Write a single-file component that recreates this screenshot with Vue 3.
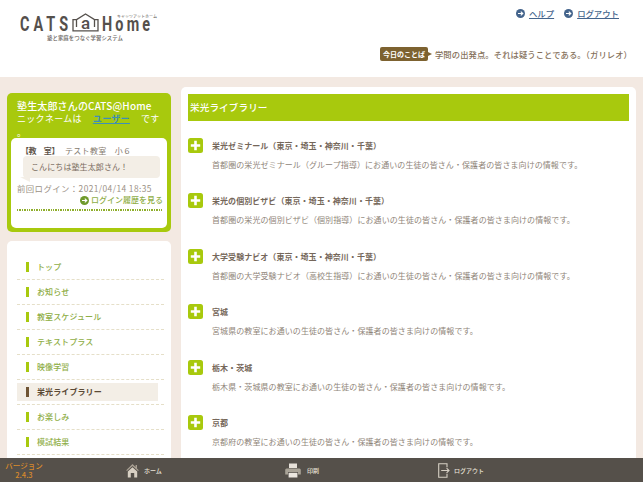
<script setup>
const menu = [
  { label: 'トップ' },
  { label: 'お知らせ' },
  { label: '教室スケジュール' },
  { label: 'テキストプラス' },
  { label: '映像学習' },
  { label: '栄光ライブラリー', active: true },
  { label: 'お楽しみ' },
  { label: '模試結果' }
]
const items = [
  { t: '栄光ゼミナール（東京・埼玉・神奈川・千葉）', d: '首都圏の栄光ゼミナール（グループ指導）にお通いの生徒の皆さん・保護者の皆さま向けの情報です。' },
  { t: '栄光の個別ビザビ（東京・埼玉・神奈川・千葉）', d: '首都圏の栄光の個別ビザビ（個別指導）にお通いの生徒の皆さん・保護者の皆さま向けの情報です。' },
  { t: '大学受験ナビオ（東京・埼玉・神奈川・千葉）', d: '首都圏の大学受験ナビオ（高校生指導）にお通いの生徒の皆さん・保護者の皆さま向けの情報です。' },
  { t: '宮城', d: '宮城県の教室にお通いの生徒の皆さん・保護者の皆さま向けの情報です。' },
  { t: '栃木・茨城', d: '栃木県・茨城県の教室にお通いの生徒の皆さん・保護者の皆さま向けの情報です。' },
  { t: '京都', d: '京都府の教室にお通いの生徒の皆さん・保護者の皆さま向けの情報です。' }
]
</script>

<template>
  <div class="page">
    <header class="header">
      <div class="logo">
        <div class="logo-main">
          <span class="logo-word cats">CATS</span>
          <svg class="logo-house" width="27" height="19" viewBox="0 0 27 19">
            <path d="M4.5 6.6H1V17.9H26V6.6H22.5L13.5 0.9L4.5 6.6V14" fill="none" stroke="#55504c" stroke-width="1.3" />
            <path d="M22.5 6.6V14" fill="none" stroke="#55504c" stroke-width="1.3" />
            <text x="13.5" y="15.6" text-anchor="middle" class="logo-a">a</text>
          </svg>
          <span class="logo-word home">Home</span>
          <span class="logo-kana">キャッツアットホーム</span>
        </div>
        <div class="logo-sub">塾と家庭をつなぐ学習システム</div>
      </div>
      <div class="header-right">
        <div class="links">
          <a class="top-link"><svg class="arrow" width="9" height="9" viewBox="0 0 10 10"><circle cx="5" cy="5" r="5" fill="#44648c" /><path d="M2.2 5H7.6M5.3 2.8L7.6 5L5.3 7.2" fill="none" stroke="#fff" stroke-width="1.2" /></svg><span>ヘルプ</span></a>
          <a class="top-link"><svg class="arrow" width="9" height="9" viewBox="0 0 10 10"><circle cx="5" cy="5" r="5" fill="#44648c" /><path d="M2.2 5H7.6M5.3 2.8L7.6 5L5.3 7.2" fill="none" stroke="#fff" stroke-width="1.2" /></svg><span>ログアウト</span></a>
        </div>
        <div class="quote">
          <span class="quote-tag">今日のことば</span>
          <span class="quote-text">学問の出発点。それは疑うことである。（ガリレオ）</span>
        </div>
      </div>
    </header>

    <div class="body">
      <aside class="side">
        <section class="user-card">
          <div class="user-name">塾生太郎さんのCATS@Home</div>
          <div class="user-nick">ニックネームは<a class="nick-link">ユーザー</a>です<br>。</div>
          <div class="user-inner">
            <div class="room"><b>【教　室】</b><span>テスト教室　小６</span></div>
            <div class="bubble">こんにちは塾生太郎さん！</div>
            <div class="last">前回ログイン：2021/04/14 18:35</div>
            <div class="history"><svg width="9" height="9" viewBox="0 0 10 10"><circle cx="5" cy="5" r="5" fill="#6f9a2b" /><path d="M2.2 5H7.6M5.3 2.8L7.6 5L5.3 7.2" fill="none" stroke="#fff" stroke-width="1.2" /></svg>ログイン履歴を見る</div>
            <div class="dots"></div>
          </div>
        </section>
        <nav class="menu">
          <div v-for="m in menu" :key="m.label" class="menu-row">
            <div class="menu-item" :class="{ active: m.active }"><i class="menu-bar"></i>{{ m.label }}</div>
          </div>
        </nav>
      </aside>

      <main class="content">
        <h1 class="title">栄光ライブラリー</h1>
        <div class="list">
          <div v-for="it in items" :key="it.t" class="entry">
            <span class="plus"><svg width="15" height="15" viewBox="0 0 15 15"><path d="M7.5 2.8V12.2M2.8 7.5H12.2" stroke="#fff" stroke-width="2.6" /></svg></span>
            <div class="entry-text">
              <div class="entry-title">{{ it.t }}</div>
              <div class="entry-desc">{{ it.d }}</div>
            </div>
          </div>
        </div>
      </main>
    </div>

    <footer class="footer">
      <div class="version">バージョン<br>2.4.3</div>
      <div class="foot-btn home-btn">
        <svg width="13" height="15" viewBox="0 0 13 15"><path d="M6.5 1L0.2 7.2L1 8L6.5 3L12 8L12.8 7.2L11 5.4V2H9.6V4Z" fill="#a89f92" /><path d="M1.8 8.4L6.5 4.2L11.2 8.4V14.5H8.2V10H4.8V14.5H1.8Z" fill="#d8d0c3" /></svg>
        <span>ホーム</span>
      </div>
      <div class="foot-btn print-btn">
        <svg width="16" height="15" viewBox="0 0 16 15"><path d="M4 0.5H12V5H4Z" fill="#e6e0d8" /><path d="M1.5 5.5H14.5Q15.8 5.5 15.8 7V11.5H13V9H3V11.5H0.2V7Q0.2 5.5 1.5 5.5Z" fill="#a9a397" /><path d="M3.6 9.8H12.4V14.5H3.6Z" fill="#ece7e0" /></svg>
        <span>印刷</span>
      </div>
      <div class="foot-btn logout-btn">
        <svg width="12" height="15" viewBox="0 0 12 15"><path d="M9 4.2V0.7H0.7V14.3H9V10.8" fill="none" stroke="#d6cfc4" stroke-width="1.1" /><path d="M3.2 7.5H11M8.6 5.2L11 7.5L8.6 9.8" fill="none" stroke="#d6cfc4" stroke-width="1.1" /></svg>
        <span>ログアウト</span>
      </div>
    </footer>
  </div>
</template>

<style scoped>
.page {
  width: 643px;
  height: 482px;
  display: flex;
  flex-direction: column;
  overflow: hidden;
  background: #f3e9e2;
  font-family: "Noto Sans CJK JP", "Noto Sans", sans-serif;
  color: #6f655c;
}
.header {
  height: 77px;
  flex: none;
  background: #fff;
  display: flex;
  justify-content: space-between;
}
.logo { padding: 13px 0 0 20px; }
.logo-main {
  display: flex;
  align-items: flex-end;
  height: 19px;
  position: relative;
}
.logo-word {
  font-family: Roboto, "Liberation Sans", sans-serif;
  font-weight: 700;
  color: #55504c;
  font-size: 20px;
  line-height: 15px;
  display: inline-block;
  transform: scaleX(0.72);
  transform-origin: left center;
  white-space: nowrap;
  flex: none;
}
.cats { letter-spacing: 5.6px; width: 52px; }
.home { letter-spacing: 4.4px; width: 49px; margin-left: 3px; }
.logo-house { display: block; flex: none; }
.logo-a {
  font-family: Roboto, "Liberation Sans", sans-serif;
  font-size: 17px;
  font-weight: 500;
  fill: #55504c;
}
.logo-kana {
  position: absolute;
  left: 97px;
  top: 1px;
  font-size: 4px;
  line-height: 5px;
  white-space: nowrap;
  color: #55504c;
  letter-spacing: 0;
}
.logo-sub {
  margin: 2px 0 0 27px;
  font-size: 5.4px;
  line-height: 9px;
  font-weight: 500;
  color: #6a655f;
  letter-spacing: 0.05px;
}
.header-right {
  display: flex;
  flex-direction: column;
  align-items: flex-end;
  padding-right: 11px;
}
.links {
  display: flex;
  gap: 10px;
  padding: 7px 13px 0 0;
}
.top-link {
  display: flex;
  align-items: center;
  gap: 4px;
  font-size: 8.4px;
  line-height: 12px;
  font-weight: 500;
  color: #44648c;
}
.top-link span { text-decoration: underline; }
.quote {
  display: flex;
  align-items: center;
  margin-top: 28px;
}
.quote-tag {
  position: relative;
  width: 48px;
  height: 14px;
  background: #7d6230;
  border-radius: 2px;
  color: #fff;
  font-size: 7px;
  font-weight: 700;
  line-height: 14px;
  text-align: center;
  margin-right: 7px;
}
.quote-tag::after {
  content: "";
  position: absolute;
  right: -4px;
  top: 5px;
  border-left: 4px solid #7d6230;
  border-top: 2px solid transparent;
  border-bottom: 2px solid transparent;
}
.quote-text {
  font-size: 8.3px;
  line-height: 14px;
  font-weight: 500;
  color: #85705a;
  letter-spacing: 0.1px;
}
.body {
  flex: 1;
  min-height: 0;
  display: flex;
  align-items: flex-start;
  padding: 10px 7px 0;
  gap: 10px;
  overflow: hidden;
}
.side {
  width: 164px;
  flex: none;
  padding-top: 6px;
  display: flex;
  flex-direction: column;
  gap: 9px;
}
.user-card {
  height: 139px;
  box-sizing: border-box;
  background: #a8c90d;
  border-radius: 5px;
  padding: 6px 4px 0;
  color: #fff;
}
.user-name {
  padding-left: 6px;
  font-size: 10px;
  line-height: 13px;
  font-weight: 500;
  letter-spacing: 0.15px;
  white-space: nowrap;
}
.user-nick {
  padding-left: 6px;
  font-size: 9px;
  line-height: 14px;
  letter-spacing: 0.3px;
  height: 26px;
  margin-top: 0;
}
.nick-link {
  color: #3d8fb8;
  font-weight: 700;
  text-decoration: underline;
  margin: 0 11px;
}
.user-inner {
  height: 90px;
  box-sizing: border-box;
  background: #fff;
  border-radius: 5px;
  padding: 7px 4px 0 6px;
  color: #85796d;
}
.room {
  font-size: 8px;
  line-height: 12px;
  display: flex;
  gap: 11px;
  padding-left: 4px;
}
.room b { color: #5f554b; font-weight: 700; width: 33px; white-space: nowrap; letter-spacing: -0.4px; }
.room span { letter-spacing: 0.3px; }
.bubble {
  position: relative;
  margin: -1px 0 0 6px;
  width: 137px;
  box-sizing: border-box;
  height: 22px;
  background: #f3eee6;
  border-radius: 4px;
  padding-left: 8px;
  font-size: 8px;
  line-height: 22px;
  color: #7a6c5e;
  letter-spacing: 0.1px;
}
.bubble::after {
  content: "";
  position: absolute;
  left: -3px;
  bottom: -4px;
  width: 0;
  height: 0;
  border-top: 5px solid #f3eee6;
  border-left: 10px solid transparent;
}
.last {
  font-size: 8.4px;
  line-height: 12px;
  margin-top: 4px;
  color: #9b9186;
  letter-spacing: 0.42px;
  white-space: nowrap;
}
.history {
  display: flex;
  align-items: center;
  justify-content: flex-end;
  gap: 2px;
  padding-right: 0;
  font-size: 8px;
  line-height: 12px;
  font-weight: 500;
  color: #8fae47;
  white-space: nowrap;
}
.dots {
  margin-top: 3px;
  height: 1.5px;
  background-image: repeating-linear-gradient(90deg, #8fae2c 0 1.4px, transparent 1.4px 2.4px);
}
.menu {
  background: #fff;
  border-radius: 5px;
  padding: 14px 7px 0 10px;
  height: 230px;
  box-sizing: border-box;
}
.menu-row {
  height: 25px;
  box-sizing: border-box;
  border-bottom: 1px dashed #e5dfc8;
  padding-top: 3px;
}
.menu-item {
  display: flex;
  align-items: center;
  gap: 8px;
  height: 18px;
  width: 141px;
  padding: 0 0 1px 9px;
  box-sizing: border-box;
  font-size: 8px;
  font-weight: 500;
  color: #8fae47;
  letter-spacing: 0.1px;
  white-space: nowrap;
}
.menu-bar {
  width: 3px;
  height: 10px;
  background: #a8c90d;
  flex: none;
}
.menu-item.active {
  background: #f3eee6;
  color: #5b4a35;
  font-weight: 700;
}
.active .menu-bar { background: #6f5433; }
.content {
  flex: 1;
  height: 460px;
  background: #fff;
  border-radius: 5px;
  padding: 7px 7px 0;
  box-sizing: border-box;
}
.title {
  margin: 0;
  height: 27px;
  background: #a8c90d;
  color: #fff;
  font-size: 9.6px;
  line-height: 27px;
  font-weight: 500;
  padding-left: 2px;
  letter-spacing: 0.1px;
}
.list {
  padding-top: 17px;
  display: flex;
  flex-direction: column;
}
.entry {
  height: 55.4px;
  flex: none;
  display: flex;
  gap: 9px;
}
.plus {
  width: 15px;
  height: 15px;
  border-radius: 2.5px;
  background: #a8c90d;
  flex: none;
  display: block;
}
.plus svg { display: block; }
.entry-text { padding-top: 2px; }
.entry-title {
  font-size: 8px;
  line-height: 12px;
  font-weight: 700;
  color: #75675a;
  letter-spacing: 0.05px;
  white-space: nowrap;
}
.entry-desc {
  margin-top: 7px;
  font-size: 8px;
  line-height: 12px;
  color: #8f8579;
  letter-spacing: 0.08px;
  white-space: nowrap;
}
.footer {
  height: 24px;
  flex: none;
  background: #55504a;
  display: flex;
  align-items: center;
  position: relative;
  color: #e8e2d8;
}
.version {
  width: 48px;
  text-align: center;
  font-size: 7.5px;
  line-height: 9.5px;
  font-weight: 500;
  color: #d88a2c;
}
.foot-btn {
  position: absolute;
  top: 4px;
  display: flex;
  align-items: center;
  height: 16px;
  font-size: 6px;
  font-weight: 500;
  white-space: nowrap;
}
.foot-btn svg { display: block; flex: none; }
.home-btn { left: 126px; gap: 5px; }
.print-btn { left: 285px; gap: 6px; }
.logout-btn { left: 438px; gap: 4px; }
</style>
